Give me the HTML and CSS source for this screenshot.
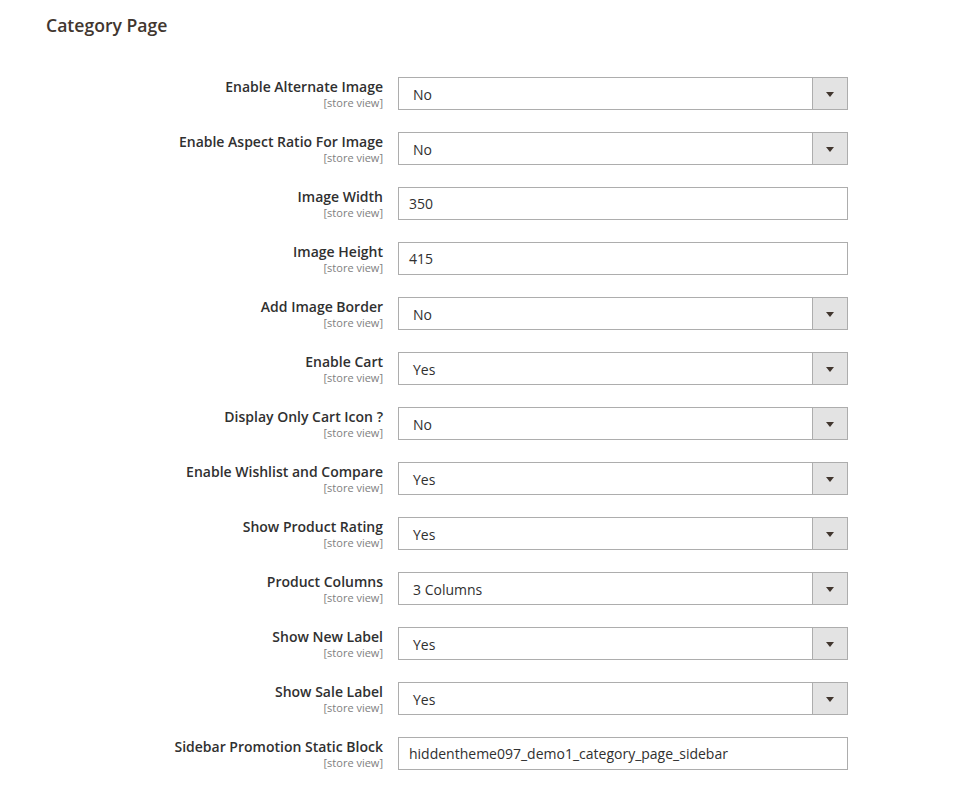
FILE: index.html
```html
<!DOCTYPE html>
<html lang="en">
<head>
<meta charset="utf-8">
<title>Category Page</title>
<link rel="stylesheet" href="styles.css">
</head>
<body>
<section class="section">
  <h2 class="section-title">Category Page</h2>
  <div class="fields">
    <div class="row">
      <div class="label"><span class="label-text">Enable Alternate Image</span><span class="scope">[store view]</span></div>
      <div class="control select"><span class="value">No</span><span class="arrow"></span></div>
    </div>
    <div class="row">
      <div class="label"><span class="label-text">Enable Aspect Ratio For Image</span><span class="scope">[store view]</span></div>
      <div class="control select"><span class="value">No</span><span class="arrow"></span></div>
    </div>
    <div class="row">
      <div class="label"><span class="label-text">Image Width</span><span class="scope">[store view]</span></div>
      <div class="control input"><span class="value">350</span></div>
    </div>
    <div class="row">
      <div class="label"><span class="label-text">Image Height</span><span class="scope">[store view]</span></div>
      <div class="control input"><span class="value">415</span></div>
    </div>
    <div class="row">
      <div class="label"><span class="label-text">Add Image Border</span><span class="scope">[store view]</span></div>
      <div class="control select"><span class="value">No</span><span class="arrow"></span></div>
    </div>
    <div class="row">
      <div class="label"><span class="label-text">Enable Cart</span><span class="scope">[store view]</span></div>
      <div class="control select"><span class="value">Yes</span><span class="arrow"></span></div>
    </div>
    <div class="row">
      <div class="label"><span class="label-text">Display Only Cart Icon ?</span><span class="scope">[store view]</span></div>
      <div class="control select"><span class="value">No</span><span class="arrow"></span></div>
    </div>
    <div class="row">
      <div class="label"><span class="label-text">Enable Wishlist and Compare</span><span class="scope">[store view]</span></div>
      <div class="control select"><span class="value">Yes</span><span class="arrow"></span></div>
    </div>
    <div class="row">
      <div class="label"><span class="label-text">Show Product Rating</span><span class="scope">[store view]</span></div>
      <div class="control select"><span class="value">Yes</span><span class="arrow"></span></div>
    </div>
    <div class="row">
      <div class="label"><span class="label-text">Product Columns</span><span class="scope">[store view]</span></div>
      <div class="control select"><span class="value">3 Columns</span><span class="arrow"></span></div>
    </div>
    <div class="row">
      <div class="label"><span class="label-text">Show New Label</span><span class="scope">[store view]</span></div>
      <div class="control select"><span class="value">Yes</span><span class="arrow"></span></div>
    </div>
    <div class="row">
      <div class="label"><span class="label-text">Show Sale Label</span><span class="scope">[store view]</span></div>
      <div class="control select"><span class="value">Yes</span><span class="arrow"></span></div>
    </div>
    <div class="row">
      <div class="label"><span class="label-text">Sidebar Promotion Static Block</span><span class="scope">[store view]</span></div>
      <div class="control input"><span class="value">hiddentheme097_demo1_category_page_sidebar</span></div>
    </div>
  </div>
</section>
</body>
</html>
```
FILE: styles.css
```css
html, body {
  margin: 0;
  padding: 0;
  background: #ffffff;
}
body {
  font-family: "Open Sans", "DejaVu Sans", sans-serif;
  color: #303030;
}
.section {
  padding: 13px 0 0 46px;
}
.section-title {
  margin: 0;
  font-size: 17.6px;
  line-height: 24px;
  font-weight: 600;
  color: #41362f;
}
.fields {
  display: flex;
  flex-direction: column;
  gap: 22px;
  margin-top: 40px;
}
.row {
  display: flex;
  gap: 15px;
}
.label {
  width: 337px;
  display: flex;
  flex-direction: column;
  align-items: flex-end;
  text-align: right;
}
.label-text {
  font-size: 14px;
  line-height: 20px;
  font-weight: 600;
  color: #303030;
}
.scope {
  font-size: 11px;
  line-height: 11px;
  color: #808080;
}
.control {
  box-sizing: border-box;
  width: 450px;
  height: 33px;
  border: 1px solid #adadad;
  background: #ffffff;
  display: flex;
  align-items: center;
  font-size: 14px;
  color: #303030;
}
.control .value {
  flex: 1;
  line-height: 19px;
  white-space: nowrap;
}
.input .value {
  padding-left: 10px;
}
.select .value {
  padding-left: 14px;
  padding-top: 2px;
}
.arrow {
  align-self: stretch;
  width: 34px;
  border-left: 1px solid #adadad;
  background: #e3e3e3;
  display: flex;
  align-items: center;
  justify-content: center;
}
.arrow::before {
  content: "";
  width: 0;
  height: 0;
  border-left: 4px solid transparent;
  border-right: 4px solid transparent;
  border-top: 5px solid #41362f;
  margin-top: 1px;
}
```
